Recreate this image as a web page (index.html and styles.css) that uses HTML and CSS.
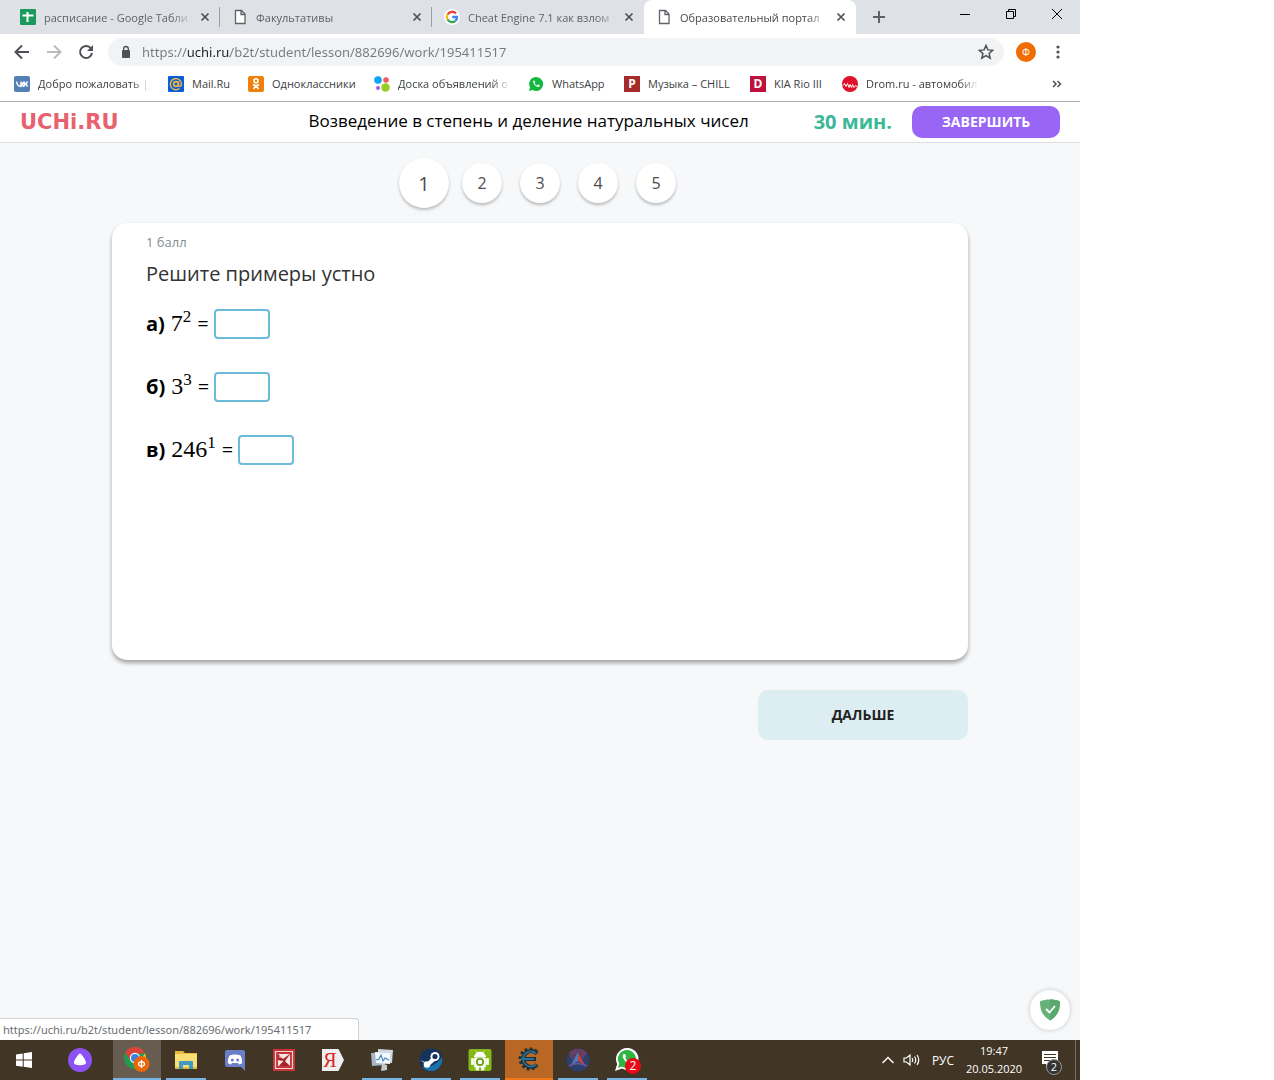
FILE: index.html
```
<!DOCTYPE html>
<html lang="ru">
<head>
<meta charset="utf-8">
<meta name="viewport" content="width=device-width, initial-scale=1">
<title>Образовательный портал</title>
<link rel="stylesheet" href="styles.css">
</head>
<body>
<div class="desktop">
  <header class="browser">
    <div class="tabstrip">
      <div class="tab">
        <svg class="fav" viewBox="0 0 16 16"><rect width="16" height="16" rx="1" fill="#1a9a5c"/><path d="M2.500 6.500h11M7.500 3v10" stroke="#fff" stroke-width="2" fill="none"/></svg>
        <span class="tab-title">расписание - Google Табли</span>
        <button class="close" aria-label="Закрыть"><svg viewBox="0 0 10 10"><path d="M1.500 1.500l7 7M8.500 1.500l-7 7"/></svg></button>
      </div>
      <div class="tab">
        <svg class="fav" viewBox="0 0 16 16"><path d="M3.500 1.500h6l3.500 3.500v9.500h-9.500zM9 1.500v4h4" fill="#fff" stroke="#5f6368" stroke-width="1.300"/></svg>
        <span class="tab-title">Факультативы</span>
        <button class="close" aria-label="Закрыть"><svg viewBox="0 0 10 10"><path d="M1.500 1.500l7 7M8.500 1.500l-7 7"/></svg></button>
      </div>
      <div class="tab tab-before">
        <svg class="fav" viewBox="0 0 16 16"><circle cx="8" cy="8" r="8" fill="#fff"/><g fill="none" stroke-width="2.300"><path d="M12 4.500A5.200 5.200 0 0 0 3.500 5.500" stroke="#ea4335"/><path d="M3.500 5.500a5.200 5.200 0 0 0 0 5" stroke="#fbbc05"/><path d="M3.500 10.500a5.200 5.200 0 0 0 8 1.300" stroke="#34a853"/><path d="M11.500 11.800A5 5 0 0 0 13 8H8.200" stroke="#4285f4"/></g></svg>
        <span class="tab-title">Cheat Engine 7.1 как взлом</span>
        <button class="close" aria-label="Закрыть"><svg viewBox="0 0 10 10"><path d="M1.500 1.500l7 7M8.500 1.500l-7 7"/></svg></button>
      </div>
      <div class="tab tab-active">
        <svg class="fav" viewBox="0 0 16 16"><path d="M3.500 1.500h6l3.500 3.500v9.500h-9.500zM9 1.500v4h4" fill="#fff" stroke="#5f6368" stroke-width="1.300"/></svg>
        <span class="tab-title">Образовательный портал</span>
        <button class="close" aria-label="Закрыть"><svg viewBox="0 0 10 10"><path d="M1.500 1.500l7 7M8.500 1.500l-7 7"/></svg></button>
      </div>
      <button class="newtab" aria-label="Новая вкладка"><svg viewBox="0 0 12 12"><path d="M6 0v12M0 6h12" stroke="#5f6368" stroke-width="2"/></svg></button>
      <div class="winbuttons">
        <button aria-label="Свернуть"><svg viewBox="0 0 12 12"><path d="M1 6.500h10"/></svg></button>
        <button aria-label="Восстановить"><svg viewBox="0 0 12 12"><path d="M1.500 3.500h7v7h-7zM3.500 3.500v-2h7v7h-2"/></svg></button>
        <button aria-label="Закрыть окно"><svg viewBox="0 0 12 12"><path d="M1 1l10 10M11 1L1 11"/></svg></button>
      </div>
    </div>
    <div class="toolbar">
      <button class="tool" aria-label="Назад"><svg viewBox="0 0 16 16"><path d="M15 8H2M8 1.500L1.500 8 8 14.500" fill="none" stroke="#4d5156" stroke-width="2"/></svg></button>
      <button class="tool" aria-label="Вперёд"><svg viewBox="0 0 16 16"><path d="M1 8h13M8 1.500L14.500 8 8 14.500" fill="none" stroke="#b9bbbe" stroke-width="2"/></svg></button>
      <button class="tool" aria-label="Обновить"><svg viewBox="0 0 16 16"><path d="M13 4.500A6 6 0 1 0 14 9" fill="none" stroke="#4d5156" stroke-width="2"/><path d="M15 1v6H9z" fill="#4d5156"/></svg></button>
      <div class="omnibox">
        <svg class="lock" viewBox="0 0 10 14"><rect x="1" y="5" width="8" height="8" rx="1" fill="#4d5156"/><path d="M2.700 6V3.800a2.300 2.300 0 0 1 4.600 0V6" fill="none" stroke="#4d5156" stroke-width="1.400"/></svg>
        <input class="url" type="text" aria-label="Адресная строка" value="https://uchi.ru/b2t/student/lesson/882696/work/195411517">
        <button class="star" aria-label="В закладки"><svg viewBox="0 0 16 16"><path d="M8 1.500l1.900 4.400 4.800.4-3.600 3.200 1.100 4.700L8 11.700l-4.200 2.500 1.100-4.700L1.300 6.300l4.800-.4z" fill="none" stroke="#4d5156" stroke-width="1.500"/></svg></button>
      </div>
      <button class="tool" aria-label="Профиль"><span class="avatar">Ф</span></button>
      <button class="tool" aria-label="Меню"><svg viewBox="0 0 16 16" fill="#4d5156"><circle cx="8" cy="3" r="1.600"/><circle cx="8" cy="8" r="1.600"/><circle cx="8" cy="13" r="1.600"/></svg></button>
    </div>
    <nav class="bookmarks">
      <a href="#"><svg class="fav" viewBox="0 0 16 16"><rect width="16" height="16" rx="2" fill="#5281b8"/><path d="M2.500 5.500c.5 3 2 5 4.500 5v-5M7 8c1.500 0 2.500-1 3-2.500M7 7.800c1.800 0 1.500 2.700 3 2.700M13.500 5.500C13 7 12 8 10.500 8c1.500 0 2.500 1 3 2.500M10.300 5.500v5" stroke="#fff" stroke-width="1.500" fill="none"/></svg><span class="fade">Добро пожаловать |</span></a>
      <a href="#"><svg class="fav" viewBox="0 0 16 16"><rect width="16" height="16" rx="1" fill="#0a5fd8"/><circle cx="8" cy="8" r="2.400" fill="none" stroke="#f5b83a" stroke-width="1.600"/><path d="M10.500 5.500v3.500c0 2 3 1.800 3-1A5.600 5.600 0 1 0 11.500 12.500" fill="none" stroke="#f5b83a" stroke-width="1.400"/></svg><span>Mail.Ru</span></a>
      <a href="#"><svg class="fav" viewBox="0 0 16 16"><rect width="16" height="16" rx="2" fill="#ee8208"/><g fill="none" stroke="#fff" stroke-width="1.600"><circle cx="8" cy="4.800" r="2"/><path d="M5 8.500c2 1.500 4 1.500 6 0M8 9.800L5.500 13M8 9.800l2.500 3.200"/></g></svg><span>Одноклассники</span></a>
      <a href="#"><svg class="fav" viewBox="0 0 16 16"><circle cx="4" cy="4" r="3.800" fill="#0aa5f2"/><circle cx="12" cy="4" r="2.800" fill="#f05a63"/><circle cx="4" cy="12" r="2" fill="#965eeb"/><circle cx="11.500" cy="11.500" r="4.300" fill="#97cf26"/></svg><span class="fade">Доска объявлений о</span></a>
      <a href="#"><svg class="fav" viewBox="0 0 16 16"><path d="M8 1a7 7 0 1 1-3.300 13.100L1 15l1-3.600A7 7 0 0 1 8 1z" fill="#12b83f"/><path d="M5.500 4.500c-1.500 2 2.500 7 5.200 6.500 1.500-.5 1-1.800.8-1.900l-1.500-.7-1 1C7.500 8.800 7 8 6.700 7.200l.6-.9-.6-1.600z" fill="#fff"/></svg><span>WhatsApp</span></a>
      <a href="#"><span class="sq sq-p">P</span><span>Музыка – CHILL</span></a>
      <a href="#"><span class="sq sq-d">D</span><span>KIA Rio III</span></a>
      <a href="#"><svg class="fav" viewBox="0 0 16 16"><circle cx="8" cy="8" r="8" fill="#df1029"/><path d="M1 9.500l1.500-2 1.500 3 1.500-3 1.500 4 1-3 1.500 3 1-3 1.500 3 1.500-2 1.500 1" fill="none" stroke="#fff" stroke-width="1"/></svg><span class="fade">Drom.ru - автомобил</span></a>
      <button class="more" aria-label="Другие закладки"><svg viewBox="0 0 10 8"><path d="M1 1l3 3-3 3M5.500 1l3 3-3 3" fill="none" stroke="#4d5156" stroke-width="1.500"/></svg></button>
    </nav>
  </header>

  <div class="page">
    <header class="site">
      <a class="logo" href="#">UCHi.RU</a>
      <h1 class="lesson">Возведение в степень и деление натуральных чисел</h1>
      <span class="timer">30 мин.</span>
      <button class="finish">ЗАВЕРШИТЬ</button>
    </header>
    <main class="content">
      <nav class="steps">
        <button class="step step-current">1</button>
        <button class="step">2</button>
        <button class="step">3</button>
        <button class="step">4</button>
        <button class="step">5</button>
      </nav>
      <section class="card">
        <p class="points">1 балл</p>
        <h2 class="question">Решите примеры устно</h2>
        <div class="row"><label for="a"><b>а)</b><span class="math">7<sup>2</sup></span><span class="eq">=</span></label><input class="answer" id="a" type="text"></div>
        <div class="row"><label for="b"><b>б)</b><span class="math">3<sup>3</sup></span><span class="eq">=</span></label><input class="answer" id="b" type="text"></div>
        <div class="row"><label for="c"><b>в)</b><span class="math">246<sup>1</sup></span><span class="eq">=</span></label><input class="answer" id="c" type="text"></div>
      </section>
      <div class="actions"><button class="next">ДАЛЬШЕ</button></div>
    </main>
    <div class="status">https://uchi.ru/b2t/student/lesson/882696/work/195411517</div>
    <button class="shield" aria-label="Защита"><svg viewBox="0 0 22 22"><path d="M11 0.500c3.500 0 7 .6 10 1.800 0 8-1.500 14-10 19.200C2.500 16.300 1 10.300 1 2.300 4 1.100 7.500.5 11 .5z" fill="#67b279"/><path d="M11 .5c3.500 0 7 .6 10 1.800 0 8-1.500 14-10 19.200z" fill="#5aa96c"/><path d="M7 10l3.500 3.500L16 7" fill="none" stroke="#fff" stroke-width="1.800"/></svg></button>
  </div>

  <footer class="taskbar">
    <button class="app start" aria-label="Пуск"><svg viewBox="0 0 24 24" fill="#fff"><path d="M4 6.500l6.700-1v6.100H4zM11.700 5.300L20 4v7.600h-8.300zM4 12.600h6.700v6.100l-6.700-1zM11.700 12.600H20V20l-8.300-1.200z"/></svg></button>
    <button class="app alice" aria-label="Алиса"><svg viewBox="0 0 24 24"><circle cx="12" cy="12" r="12" fill="#8c52f5"/><path d="M12 5.500c1.500 0 6.500 7.500 6 9.500-.6 3-11.400 3-12 0-.5-2 4.500-9.500 6-9.500z" fill="#fff"/></svg></button>
    <div class="apps">
      <button class="app running focused" aria-label="Chrome"><svg class="chrome" viewBox="0 0 26 26"><circle cx="11" cy="11" r="11" fill="#229a50"/><path d="M1.500 5.500A11 11 0 0 1 21 6.500H11L6 13z" fill="#dd4438"/><path d="M21 6.500A11 11 0 0 1 11 22l5-9z" fill="#f8c830"/><circle cx="11" cy="11" r="5.200" fill="#fff"/><circle cx="11" cy="11" r="4" fill="#397fe8"/><circle cx="17.500" cy="17" r="8" fill="#e8670a"/><path d="M17.500 13v8" stroke="#fff" stroke-width="1.300"/><ellipse cx="17.500" cy="17" rx="3" ry="2.200" fill="none" stroke="#fff" stroke-width="1.200"/></svg></button>
      <button class="app running" aria-label="Проводник"><svg viewBox="0 0 24 24"><path d="M1 3h8l2 2h12v16H1z" fill="#e5b93c"/><path d="M1 6h22v13H1z" fill="#fbdd75"/><path d="M5 21v-7q0-1 1-1h12q1 0 1 1v7h-4v-4H9v4z" fill="#3e9bc4"/></svg></button>
      <button class="app" aria-label="Discord"><svg viewBox="0 0 24 24"><path d="M4 2h16q2 0 2 2v19l-4-4H4q-2 0-2-2V4q0-2 2-2z" fill="#6b7fc9"/><path d="M6.500 7.500Q12 5.500 17.500 7.500q2 3.500 1.700 7.500-1.500 1.400-3.200 1.500l-1-1.500H9l-1 1.500q-1.700-.1-3.200-1.500-.3-4 1.700-7.500z" fill="#fff"/><circle cx="9.300" cy="12" r="1.500" fill="#6b7fc9"/><circle cx="14.700" cy="12" r="1.500" fill="#6b7fc9"/></svg></button>
      <button class="app" aria-label="Редактор"><svg viewBox="0 0 24 24"><rect x="1" y="1" width="22" height="22" fill="#c6343a"/><path d="M3.500 3.500h17v17h-17z" fill="none" stroke="#f3d5d0" stroke-width="1.200"/><path d="M6 6h12v12H6z" fill="#f6e6e2"/><path d="M6 6l5 5 8-6-6 8 5 5H7l4-5-5-1z" fill="#a82229"/><path d="M7 9h3M14 14l3 1M8 15l3-2" stroke="#f6e6e2" stroke-width="1.200"/></svg></button>
      <button class="app" aria-label="Яндекс"><span class="ya">Я</span></button>
      <button class="app running" aria-label="Диспетчер"><svg viewBox="0 0 24 24"><path d="M8 1l15 1-1 13-14-1z" fill="#cfd8de"/><path d="M1 5l14-1v13l-13 1z" fill="#a7b6c0"/><path d="M5 4l15 1v11l-14-1z" fill="#f2f8fc"/><path d="M6 12l3-1 2-4 2 6 2-3 4 2" fill="none" stroke="#4688bc" stroke-width="1.200"/><path d="M12 16l5 1v5l-6 1z" fill="#c5cbd0"/></svg></button>
      <button class="app running" aria-label="Steam"><svg viewBox="0 0 24 24"><circle cx="12" cy="12" r="11.500" fill="#13345f"/><path d="M3 19a11.500 11.500 0 0 0 20-10q-6 10-20 10z" fill="#1b72a8"/><path d="M1 12l7 3 5-6 4 3-7 6" fill="#fff"/><circle cx="16" cy="8.500" r="4.500" fill="#fff"/><circle cx="16" cy="8.500" r="2.600" fill="#13345f"/><circle cx="8" cy="16.500" r="3.300" fill="#fff"/></svg></button>
      <button class="app running" aria-label="Android"><svg viewBox="0 0 24 24"><rect x="0.500" y="1" width="23" height="22" rx="2" fill="#84b817"/><path d="M6.500 9a5.500 5 0 0 1 11 0zM6.500 10h11v9h-11zM3.500 10.500h2v6h-2zM18.500 10.500h2v6h-2zM8 19h2.500v3H8zM13.500 19H16v3h-2.500zM7.500 2.500l2 3M16.500 2.500l-2 3" fill="#fff" stroke="#fff" stroke-width=".7"/><circle cx="12" cy="14" r="3.200" fill="none" stroke="#699d12" stroke-width="1.800"/></svg></button>
      <button class="app alert" aria-label="Cheat Engine"><svg viewBox="0 0 24 24" fill="none"><path d="M19.500 5A9.500 9.500 0 1 0 19.500 19" stroke="#1d3138" stroke-width="4" stroke-dasharray="2.600 2.200"/><path d="M20 6.500A8 8 0 1 0 20 17.500M4 12h15" stroke="#1d3138" stroke-width="4"/><path d="M19 6.500A7.600 7.600 0 1 0 19 17.500M4 12h13" stroke="#28719b" stroke-width="1.800"/></svg></button>
      <button class="app running" aria-label="Приложение"><svg viewBox="0 0 24 24"><circle cx="12" cy="12" r="11.500" fill="#2c3f6d"/><path d="M3 5a11.500 11.500 0 0 1 18 0l-4 6-5-8-6 10z" fill="#664064"/><path d="M12 4l7 13-7-4-7 4z" fill="#c8433d"/><path d="M12 4v9l-7 4z" fill="#467cc0"/><path d="M3 18q9-5 18 0" stroke="#655599" stroke-width="2" fill="none"/></svg></button>
      <button class="app running" aria-label="WhatsApp"><svg viewBox="0 0 24 24"><path d="M12 0a11 11 0 1 1-5 20.500L0 23l2.200-7A11 11 0 0 1 12 0z" fill="#fff"/><path d="M12 2a9 9 0 1 1-5 16.500L3 20l1.200-4.500A9 9 0 0 1 12 2z" fill="#2cb742"/><path d="M8.500 6c-3 3 3 10.500 7.500 9.500 2-.5 2-2.500 1.500-2.800l-2.500-1-1.300 1.500c-1.700-.7-3-2-3.500-3.500l1-1.200L10 6z" fill="#fff"/></svg><span class="badge">2</span></button>
    </div>
    <div class="tray">
      <button aria-label="Скрытые значки"><svg viewBox="0 0 12 12"><path d="M.5 9L6 3.500 11.500 9" fill="none" stroke="#fff" stroke-width="1.400"/></svg></button>
      <button aria-label="Громкость"><svg class="vol" viewBox="0 0 18 14"><path d="M1 5h2.500L7 2v10L3.500 9H1zM9 5q1.500 2 0 4M11.500 3.500q2.500 3.500 0 7M14 2q3.500 5 0 10" fill="none" stroke="#fff" stroke-width="1.200"/></svg></button>
      <span class="lang">РУС</span>
      <div class="clock"><span>19:47</span><span>20.05.2020</span></div>
      <button class="notes" aria-label="Уведомления"><svg viewBox="0 0 24 24"><path d="M3 3h16v13h-8l-4 4v-4H3z" fill="#fff"/><path d="M5 6.500h12M5 9.500h12M5 12.500h8" stroke="#413526" stroke-width="1.200"/></svg><span class="count">2</span></button>
    </div>
  </footer>
</div>
</body>
</html>
```
FILE: styles.css
```
* { box-sizing: border-box; }
body { margin: 0; padding-right: 194px; background: #fff; font-family: "Open Sans", "Noto Sans", sans-serif; color: #000; }
button { padding: 0; border: 0; background: none; font: inherit; color: inherit; display: flex; align-items: center; justify-content: center; }
a { color: inherit; text-decoration: none; }
h1, h2, p { margin: 0; font-weight: 400; }
svg { display: block; flex: none; }

.desktop { display: flex; flex-direction: column; min-height: 100vh; }

/* Browser window */
.tabstrip { display: flex; height: 34px; padding-left: 8px; background: #dee1e6; font-size: 11px; color: #5f6368; }
.tab { display: flex; align-items: center; flex: 0 1 212px; min-width: 0; gap: 8px; padding: 0 10px 0 12px; background: linear-gradient(#9a9da1, #9a9da1) right center / 1px 20px no-repeat; }
.tab-before { background: none; }
.tab-active { background: #fff; border-radius: 8px 8px 0 0; color: #45494d; }
.fav { width: 16px; height: 16px; flex: none; }
.tab-title { flex: 1; overflow: hidden; white-space: nowrap; mask-image: linear-gradient(to left, transparent, #000 20px); }
.close svg { width: 10px; height: 10px; stroke: #4d5156; stroke-width: 1.7; }
.newtab { width: 46px; }
.newtab svg { width: 12px; height: 12px; }
.winbuttons { display: flex; margin-left: auto; height: 28px; }
.winbuttons button { width: 46px; }
.winbuttons svg { width: 12px; height: 12px; fill: none; stroke: #000; }

.toolbar { display: flex; align-items: center; height: 36px; padding: 0 6px; }
.tool { width: 32px; height: 32px; }
.tool svg { width: 16px; height: 16px; }
.omnibox { display: flex; align-items: center; flex: 1; min-width: 0; height: 28px; margin: 0 6px; padding: 0 10px 0 13px; gap: 11px; border-radius: 14px; background: #f1f3f4; }
.lock { width: 10px; height: 14px; }
.url { flex: 1; min-width: 0; padding: 0; border: 0; outline: 0; font: 13px "Noto Sans", "Open Sans", sans-serif; color: transparent; background: linear-gradient(to right, #757a80 46px, #202124 46px, #202124 88px, #757a80 88px); background-clip: text; }
.star svg { width: 16px; height: 16px; }
.avatar { width: 20px; height: 20px; border-radius: 50%; background: #ef6c00; color: #fff; font-size: 10px; line-height: 20px; }

.bookmarks { display: grid; grid-template-columns: 154px 80px 126px 154px 96px 126px 92px 137px 1fr; align-items: center; height: 32px; padding: 0 18px 4px 14px; border-bottom: 1px solid #b0b2b5; font-size: 11px; color: #3c4043; }
.bookmarks a { display: flex; align-items: center; gap: 8px; white-space: nowrap; }
.fade { width: 113px; overflow: hidden; mask-image: linear-gradient(to left, transparent, #000 20px); }
.sq { width: 16px; height: 16px; color: #fff; font-size: 12px; font-weight: 700; line-height: 16px; text-align: center; }
.sq-p { background: #a52a2a; }
.sq-d { background: #c0103c; }
.more { justify-self: end; }
.more svg { width: 10px; height: 8px; }

/* Lesson */
.page { position: relative; display: flex; flex-direction: column; flex: 1; background: #f6f8fa; }
.site { display: flex; align-items: center; height: 41px; padding: 0 20px; background: #fff; border-bottom: 1px solid #dcdfe1; }
.logo { font: 700 21px/38px "DejaVu Sans", sans-serif; color: #e8616f; }
.lesson { margin-left: auto; font-size: 17px; line-height: 24px; padding-bottom: 2px; }
.timer { margin: 0 20px 0 65px; padding-bottom: 2px; font-size: 20px; font-weight: 700; color: #3bb898; }
.finish { width: 148px; height: 32px; padding-bottom: 2px; border-radius: 10px; background: #9965f4; color: #fff; font-size: 14px; font-weight: 700; }

.content { width: 100%; max-width: 856px; margin: 0 auto; padding-top: 15px; }
.steps { display: flex; align-items: center; justify-content: center; gap: 18px; height: 50px; margin-bottom: 15px; }
.step { width: 40px; height: 40px; border-radius: 50%; background: #fff; box-shadow: 0 2px 3px rgba(0, 0, 0, .25); font-size: 16px; color: #4d4d4d; }
.step-current { width: 50px; height: 50px; margin: 0 -5px; font-size: 20px; }

.card { min-height: 437px; padding: 9px 34px; border-radius: 15px; background: #fff; box-shadow: 0 3px 4px rgba(0, 0, 0, .35); }
.points { font-size: 13px; line-height: 20px; color: #858c90; }
.question { margin: 7px 0 20px; font-size: 20px; line-height: 30px; color: #333; }
.row { display: flex; align-items: center; height: 30px; margin-bottom: 33px; }
.row label { display: flex; align-items: baseline; padding-bottom: 2px; font-size: 20px; line-height: 30px; }
.math { margin-left: 6px; font-family: "Liberation Serif", serif; font-size: 24px; }
.math sup { font-size: 17px; line-height: 0; vertical-align: 9px; }
.eq { margin: 0 5px 0 6px; }
.answer { width: 56px; height: 30px; padding: 0 6px; border: 2px solid #6bbbd9; border-radius: 4px; background: #fff; font-size: 16px; }
.actions { display: flex; justify-content: flex-end; margin-top: 30px; }
.next { width: 210px; height: 50px; padding-bottom: 2px; border-radius: 10px; background: #ddeef3; font-size: 14px; font-weight: 700; color: #222; }

.status { position: absolute; left: 0; bottom: 0; width: 359px; height: 22px; padding-left: 3px; border: 1px solid #cdd0d4; border-width: 1px 1px 0 0; border-radius: 0 4px 0 0; background: #fff; font-family: "Noto Sans", sans-serif; font-size: 11px; line-height: 22px; color: #6b6e73; }
.shield { position: absolute; right: 10px; bottom: 10px; width: 40px; height: 40px; border-radius: 50%; background: #fff; box-shadow: 0 0 5px rgba(0, 0, 0, .2); }
.shield svg { width: 22px; height: 22px; }

/* Taskbar */
.taskbar { display: flex; height: 40px; background: #413526; color: #fff; font-size: 12px; }
.app { position: relative; width: 48px; height: 40px; }
.app svg { width: 24px; height: 24px; }
.app .chrome { width: 26px; height: 26px; }
.alice { margin: 0 9px 0 8px; }
.apps { display: flex; gap: 1px; }
.running { background: linear-gradient(#76b5e8, #76b5e8) center bottom / 40px 2px no-repeat; }
.focused { background: linear-gradient(#76b5e8, #76b5e8) center bottom / 48px 2px no-repeat #675c50; }
.alert { background: #b96724; border-bottom: 2px solid #f07818; }
.ya { width: 22px; height: 22px; padding-right: 6px; background: #eee; clip-path: polygon(0 0, 75% 0, 100% 50%, 75% 100%, 0 100%); color: #e02020; font: 20px/22px "Liberation Serif", serif; }
.badge { position: absolute; left: 22px; top: 18px; width: 16px; height: 16px; border-radius: 50%; background: #e60b17; line-height: 16px; }
.tray { display: flex; align-items: center; margin-left: auto; padding-right: 4px; }
.tray button { width: 24px; height: 40px; }
.tray svg { width: 12px; height: 12px; }
.tray .vol { width: 18px; height: 14px; }
.lang { width: 38px; text-align: center; }
.clock { display: flex; flex-direction: column; width: 64px; text-align: center; font-size: 11px; line-height: 18px; }
.tray .notes { position: relative; width: 50px; border-right: 1px solid #777064; }
.tray .notes svg { width: 24px; height: 24px; }
.count { position: absolute; left: 20px; top: 19px; width: 16px; height: 16px; border: 1px solid #999; border-radius: 50%; background: #333; font-size: 11px; line-height: 14px; }
```
